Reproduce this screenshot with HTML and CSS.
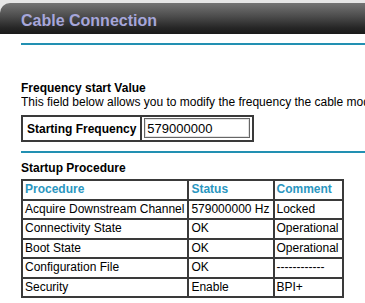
FILE: index.html
```html
<!DOCTYPE html>
<html lang="en">

<head>
    <meta charset="UTF-8">
    <meta name="viewport" content="width=device-width, initial-scale=1.0">
    <title>Cable Connection</title>
    <link rel="stylesheet" href="styles.css">
</head>

<body>
    <div class="top">
        <div class="titlebar">Cable Connection</div>
    </div>
    <div class="content">
        <div class="rule"></div>

        <div class="section first">
            <div class="head">Frequency start Value</div>
            <div class="desc">This field below allows you to modify the frequency the cable modem starts scanning at.</div>
            <table class="grid freq">
                <tr>
                    <td class="label">Starting Frequency</td>
                    <td class="field"><input type="text" value="579000000"></td>
                </tr>
            </table>
        </div>

        <div class="rule"></div>

        <div class="section">
            <div class="head">Startup Procedure</div>
            <table class="grid startup">
                <tr class="title">
                    <td>Procedure</td>
                    <td>Status</td>
                    <td>Comment</td>
                </tr>
                <tr>
                    <td>Acquire Downstream Channel</td>
                    <td>579000000 Hz</td>
                    <td>Locked</td>
                </tr>
                <tr>
                    <td>Connectivity State</td>
                    <td>OK</td>
                    <td>Operational</td>
                </tr>
                <tr>
                    <td>Boot State</td>
                    <td>OK</td>
                    <td>Operational</td>
                </tr>
                <tr>
                    <td>Configuration File</td>
                    <td>OK</td>
                    <td>------------</td>
                </tr>
                <tr>
                    <td>Security</td>
                    <td>Enable</td>
                    <td>BPI+</td>
                </tr>
            </table>
        </div>
    </div>
</body>

</html>
```

FILE: styles.css
```css
* {
    padding: 0;
    margin: 0;
}

body {
    background: #fff;
    font-family: "Liberation Sans", Arial, sans-serif;
    font-size: 12px;
    color: #000;
    overflow: hidden;
}

.top {
    background: #e6e6e6;
    padding-top: 3px;
}

.titlebar {
    height: 27px;
    padding: 4px 0 0 21px;
    line-height: 27px;
    border-top-left-radius: 10px;
    background: linear-gradient(#747474, #4a4a4a 45%, #262626 80%, #1a1a1a);
    color: #a6a6da;
    font-size: 16px;
    font-weight: bold;
}

.content {
    padding-left: 21px;
}

.rule {
    height: 2px;
    margin-top: 9px;
    background: #2290b2;
}

.section {
    margin-top: 8px;
}

.section.first {
    margin-top: 36px;
}

.head {
    font-weight: bold;
    line-height: 14px;
}

/* the sentence runs past the window, as on the device page */
.desc {
    line-height: 14px;
    white-space: nowrap;
    overflow: hidden;
}

.grid {
    border-collapse: collapse;
}

.grid td {
    border: 2px solid #3a3a3a;
    white-space: nowrap;
}

.freq {
    margin-top: 6px;
}

.freq td.label {
    padding: 0 4px;
    font-weight: bold;
}

.freq td.field {
    padding: 1px 2px 2px 2px;
}

.freq input {
    display: block;
    width: 106px;
    height: 20px;
    box-sizing: border-box;
    padding: 0 2px;
    border: 1px solid #666;
    box-shadow: inset 0 0 0 1px #e2e2e2;
    font-family: "Liberation Sans", Arial, sans-serif;
    font-size: 13px;
    color: #000;
    background: #fff;
}

.startup {
    margin-top: 4px;
}

.startup td {
    padding: 1px 3px 2px 2px;
    line-height: 14.5px;
}

.startup tr.title td {
    color: #2a96c0;
    font-weight: bold;
}
```
